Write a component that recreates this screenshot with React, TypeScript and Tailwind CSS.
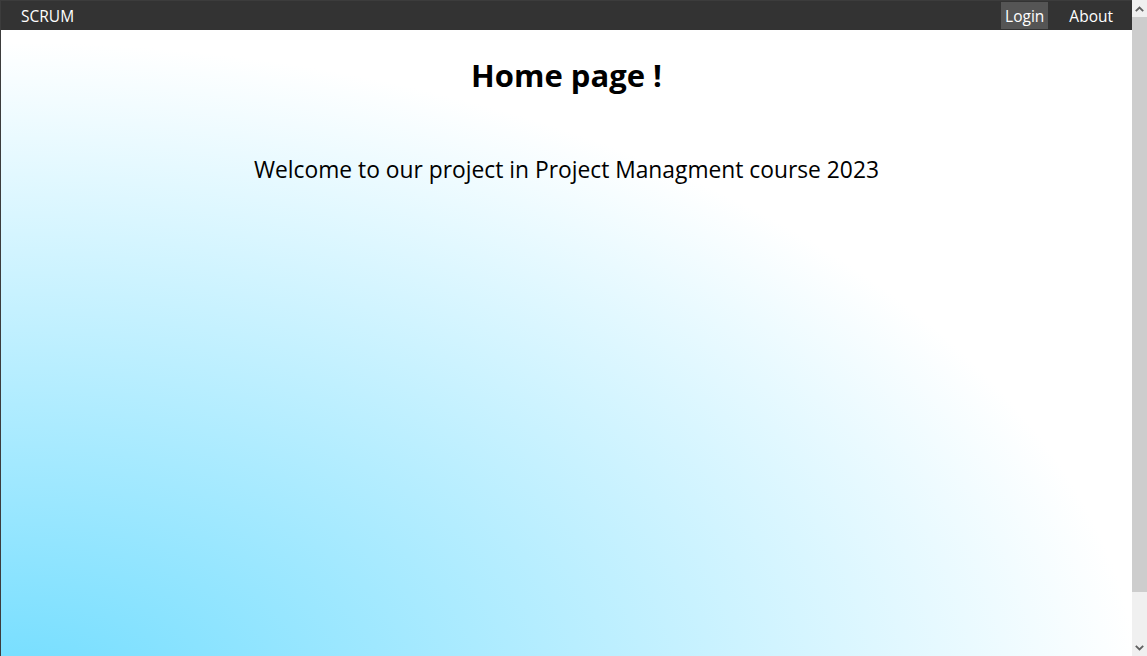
function Chevron({ up }: { up?: boolean }) {
    return (
        <svg width="9" height="6" viewBox="0 0 9 6" className={up ? '' : 'rotate-180'}>
            <path d="M0.8 5.2 L4.5 1.5 L8.2 5.2" fill="none" stroke="#606060" strokeWidth="1.8" />
        </svg>
    );
}

export default function App() {
    return (
        <div className="flex h-[656px] overflow-hidden font-['Open_Sans',sans-serif] text-black">
            <div className="flex-1 border-l border-t border-[#3c3c3c] bg-[radial-gradient(ellipse_1140px_670px_at_0px_711px,#6ddcff,#ffffff)]">
                {/* Top nav */}
                <nav className="h-[29px] pt-[2px] bg-[#333333] flex items-center justify-between text-[15.5px] text-white">
                    <span className="pl-5">SCRUM</span>
                    <div className="flex h-full -mt-[2px] items-stretch pr-[19px]">
                        <a className="flex items-center pt-[2px] px-[4px] bg-[#555555]">Login</a>
                        <a className="flex items-center pt-[2px] pl-[21px]">About</a>
                    </div>
                </nav>

                <div className="flex flex-col items-center">
                    <h1 className="mt-[25px] text-[31px] font-bold leading-[40px]">Home page !</h1>
                    <p className="mt-[60px] text-[22.8px] leading-[30px]">Welcome to our project in Project Managment course 2023</p>
                </div>
            </div>

            {/* Scrollbar */}
            <div className="w-[15px] flex flex-col bg-[#f0f0f0]">
                <div className="h-[17px] flex items-center justify-center">
                    <Chevron up />
                </div>
                <div className="h-[575px] bg-[#cdcdcd]" />
                <div className="flex-1" />
                <div className="h-[17px] flex items-center justify-center">
                    <Chevron />
                </div>
            </div>
        </div>
    );
}
